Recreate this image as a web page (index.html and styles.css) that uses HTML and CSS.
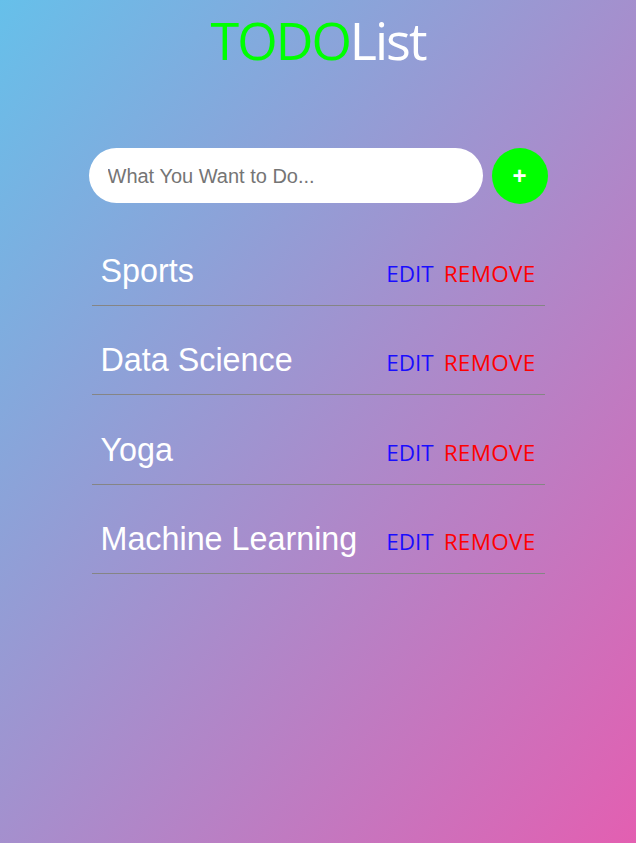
FILE: index.html
```html
<!DOCTYPE html>
<html lang="en">
<head>
<meta charset="utf-8">
<title>TODO List</title>
<link rel="stylesheet" href="styles.css">
</head>
<body>
<div class="app">
  <h1 class="title"><span class="title-todo">TODO</span><span class="title-list">List</span></h1>
  <form class="add-form">
    <input class="add-input" type="text" placeholder="What You Want to Do...">
    <button class="add-btn" type="button">+</button>
  </form>
  <ul class="items">
    <li class="item"><span class="item-text">Sports</span><span class="actions"><span class="edit">EDIT</span><span class="remove">REMOVE</span></span></li>
    <li class="item"><span class="item-text">Data Science</span><span class="actions"><span class="edit">EDIT</span><span class="remove">REMOVE</span></span></li>
    <li class="item"><span class="item-text">Yoga</span><span class="actions"><span class="edit">EDIT</span><span class="remove">REMOVE</span></span></li>
    <li class="item"><span class="item-text">Machine Learning</span><span class="actions"><span class="edit">EDIT</span><span class="remove">REMOVE</span></span></li>
  </ul>
</div>
</body>
</html>
```
FILE: styles.css
```css
html, body {
  margin: 0;
  padding: 0;
}
body {
  min-height: 100vh;
  background: linear-gradient(to bottom right, #66c0ea, #e35fb1);
  font-family: "Liberation Sans", Arial, sans-serif;
}
.app {
  display: flex;
  flex-direction: column;
  align-items: center;
}
.title {
  margin: 4px 0 0;
  font-family: "Open Sans", "Noto Sans", sans-serif;
  font-weight: 400;
  font-size: 52px;
  line-height: 72px;
  letter-spacing: -2px;
}
.title-todo { color: #00ff00; }
.title-list { color: #ffffff; }
.add-form {
  display: flex;
  gap: 9px;
  margin-top: 72px;
  width: 459px;
}
.add-input {
  flex: 1;
  height: 55px;
  box-sizing: border-box;
  border: none;
  border-radius: 28px;
  padding: 2px 19px 0;
  font-family: "Liberation Sans", Arial, sans-serif;
  font-size: 20px;
  color: #333;
  outline: none;
  background: #fff;
}
.add-input::placeholder { color: #757575; }
.add-btn {
  width: 56px;
  height: 56px;
  border: none;
  border-radius: 50%;
  background: #00ff00;
  color: #fff;
  font-family: "Liberation Sans", Arial, sans-serif;
  font-weight: 700;
  font-size: 24px;
  padding: 0;
}
.items {
  list-style: none;
  margin: 32px 0 0;
  padding: 0;
  width: 453px;
}
.item {
  display: flex;
  justify-content: space-between;
  align-items: baseline;
  padding: 17px 9px 15px 9px;
  margin-top: 19.3px;
  border-bottom: 1px solid #858585;
}
.item:first-child { margin-top: 0; }
.item-text {
  color: #fff;
  font-size: 32.3px;
  line-height: 37px;
}
.actions {
  display: flex;
  gap: 10px;
  font-family: "Open Sans", "Noto Sans", sans-serif;
  font-size: 22.5px;
  letter-spacing: 0.3px;
}
.edit { color: #1a0dff; letter-spacing: 0; }
.remove { color: #ff0000; }
```
